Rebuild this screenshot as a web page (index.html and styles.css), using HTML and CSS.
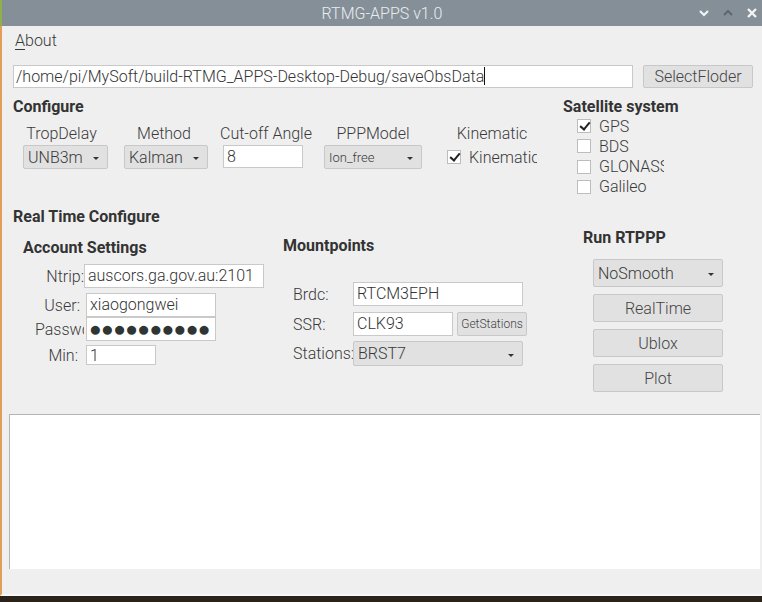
FILE: index.html
```html
<!DOCTYPE html>
<html>
<head>
<meta charset="utf-8">
<link rel="stylesheet" href="styles.css">
</head>
<body>
<div class="app">
  <div class="titlebar">
    <div></div>
    <div class="title">RTMG-APPS v1.0</div>
    <div class="wbtns">
      <svg class="wb" width="12" height="10" viewBox="0 0 12 10"><path d="M2 3 L6 7 L10 3" fill="none" stroke="#f2f4f5" stroke-width="2.2"/></svg>
      <svg class="wb" width="12" height="10" viewBox="0 0 12 10"><path d="M2 7 L6 3 L10 7" fill="none" stroke="#5f686f" stroke-width="2.2"/></svg>
      <svg class="wb" width="12" height="12" viewBox="0 0 12 12"><path d="M2 2 L10 10 M10 2 L2 10" fill="none" stroke="#f2f4f5" stroke-width="2.4"/></svg>
    </div>
  </div>
  <div class="win">
    <div class="menubar"><span class="menu"><u>A</u>bout</span></div>

    <div class="pathrow">
      <div class="input path">/home/pi/MySoft/build-RTMG_APPS-Desktop-Debug/saveObsData<span class="caret"></span></div>
      <div class="btn selbtn">SelectFloder</div>
    </div>

    <div class="top">
      <div class="configure">
        <div class="h16 hd">Configure</div>
        <div class="cfgrow">
          <div class="col c1">
            <div class="lbl">TropDelay</div>
            <div class="combo w85">UNB3m<span class="arrow"></span></div>
          </div>
          <div class="col c2">
            <div class="lbl">Method</div>
            <div class="combo w84">Kalman<span class="arrow"></span></div>
          </div>
          <div class="col c3">
            <div class="lbl">Cut-off Angle</div>
            <div class="input cut">8</div>
          </div>
          <div class="col c4">
            <div class="lbl">PPPModel</div>
            <div class="combo w98 small">Ion_free<span class="arrow"></span></div>
          </div>
          <div class="col c5">
            <div class="lbl">Kinematic</div>
            <div class="chkrow kin"><span class="cb on"></span><span class="cbt">Kinematic</span></div>
          </div>
        </div>
      </div>
      <div class="satellite">
        <div class="h16 hd">Satellite system</div>
        <div class="satlist">
          <div class="chkrow"><span class="cb on"></span><span class="cbt">GPS</span></div>
          <div class="chkrow"><span class="cb"></span><span class="cbt">BDS</span></div>
          <div class="chkrow"><span class="cb"></span><span class="cbt clip">GLONASS</span></div>
          <div class="chkrow"><span class="cb"></span><span class="cbt">Galileo</span></div>
        </div>
      </div>
    </div>

    <div class="h16 hd rtc">Real Time Configure</div>

    <div class="rtcols">
      <div class="account">
        <div class="h16">Account Settings</div>
        <div class="frow r-ntrip"><div class="flbl">Ntrip:</div><div class="input ntrip">auscors.ga.gov.au:2101</div></div>
        <div class="frow r-user"><div class="flbl pr4">User:</div><div class="input user">xiaogongwei</div></div>
        <div class="frow r-pass"><div class="flbl plbl">Passwd:</div><div class="input pass">●●●●●●●●●●</div></div>
        <div class="frow r-min"><div class="flbl pr6">Min:</div><div class="input min">1</div></div>
      </div>
      <div class="mount">
        <div class="h16">Mountpoints</div>
        <div class="mrow r-brdc"><div class="mlbl">Brdc:</div><div class="input w170">RTCM3EPH</div></div>
        <div class="mrow r-ssr"><div class="mlbl">SSR:</div><div class="input w100">CLK93</div><div class="btn getst">GetStations</div></div>
        <div class="mrow r-st"><div class="mlbl">Stations:</div><div class="combo w170 st">BRST7<span class="arrow"></span></div></div>
      </div>
      <div class="run">
        <div class="h16">Run RTPPP</div>
        <div class="runbtns">
          <div class="combo rb">NoSmooth<span class="arrow"></span></div>
          <div class="btn rb">RealTime</div>
          <div class="btn rb">Ublox</div>
          <div class="btn rb">Plot</div>
        </div>
      </div>
    </div>

    <div class="log"></div>
  </div>
</div>
</body>
</html>
```

FILE: styles.css
```css
* { box-sizing: border-box; }
html, body { margin: 0; padding: 0; }
body {
  width: 762px;
  height: 602px;
  background: #2b2219;
  font-family: Roboto, "Liberation Sans", sans-serif;
  font-weight: 300;
  color: #333;
  overflow: hidden;
}
.app { display: flex; flex-direction: column; width: 762px; height: 596px; }
.titlebar {
  height: 26px;
  background: #858f97;
  border-left: 2px solid #8fb04a;
  display: grid;
  grid-template-columns: 1fr auto 1fr;
  align-items: center;
}
.title { color: #e9edf0; font-size: 16px; font-weight: 300; }
.wbtns { display: flex; justify-content: flex-end; align-items: center; gap: 12px; padding-right: 4px; }
.wb { display: block; }

.win {
  flex: 1;
  background: #efefef;
  border-left: 2px solid #e29d5a;
  border-bottom: 2px solid #f8f8f8;
  display: flex;
  flex-direction: column;
}
.menubar { padding: 5px 0 14px 13px; height: 39px; line-height: 20px; font-size: 16px; color: #3a3a3a; }
.menu u { text-decoration-thickness: 1px; text-underline-offset: 3px; }

.input {
  background: #fff;
  border: 1px solid #c9c9c9;
  font-size: 16px;
  line-height: 21px;
  padding-left: 3px;
  color: #333;
  white-space: nowrap;
  overflow: hidden;
}
.btn {
  background: #e1e1e1;
  border: 1px solid #c8c8c8;
  border-radius: 2px;
  font-size: 16px;
  color: #444;
  display: flex;
  align-items: center;
  justify-content: center;
}
.combo {
  background: #e1e1e1;
  border: 1px solid #c8c8c8;
  border-radius: 2px;
  font-size: 16px;
  color: #3a3a3a;
  height: 24px;
  display: flex;
  align-items: center;
  padding-left: 4px;
  position: relative;
}
.arrow {
  position: absolute;
  right: 8px;
  top: 50%;
  margin-top: 0px;
  width: 0; height: 0;
  border-left: 3px solid transparent;
  border-right: 3px solid transparent;
  border-top: 3px solid #333;
}

.pathrow { display: flex; gap: 10px; margin-left: 11px; height: 23px; }
.path { width: 620px; height: 23px; padding-left: 2px; }
.caret { display: inline-block; width: 1px; height: 18px; background: #111; vertical-align: -3px; }
.selbtn { width: 110px; height: 23px; }

.h16 { font-size: 16px; font-weight: 700; line-height: 20px; color: #333; }
.hd { line-height: 18px; }

.top { display: flex; margin-top: 10px; height: 110px; }
.configure { width: 550px; margin-left: 11px; }
.cfgrow { display: flex; margin-top: 8px; }
.col { display: flex; flex-direction: column; }
.lbl { font-size: 16px; line-height: 20px; text-align: center; color: #3a3a3a; margin-bottom: 1px; white-space: nowrap; }
.c1 { margin-left: 10px; width: 85px; }
.c1 .lbl { margin-right: 8px; }
.c2 { margin-left: 16px; width: 84px; }
.c2 .lbl { margin-right: 4px; }
.c3 { margin-left: 12px; width: 92px; }
.c4 { margin-left: 12px; width: 98px; }
.c5 { margin-left: 25px; width: 90px; }
.w85 { width: 85px; }
.w84 { width: 84px; }
.w98 { width: 98px; }
.small { font-size: 13px; }
.cut { width: 80px; height: 23px; margin-left: 3px; }

.chkrow { display: flex; align-items: center; height: 20px; font-size: 16px; color: #3a3a3a; white-space: nowrap; }
.cb {
  width: 14px; height: 14px; flex: none;
  background: #fff; border: 1px solid #bdbdbd;
  position: relative;
}
.cb.on::after {
  content: "";
  position: absolute;
  left: 4px; top: 0px;
  width: 4px; height: 8px;
  border-right: 2px solid #222;
  border-bottom: 2px solid #222;
  transform: rotate(40deg);
}
.cbt { margin-left: 8px; }
.kin { margin-top: 2px; width: 90px; overflow: hidden; }
.satellite { margin-left: 0; }
.satlist { margin-left: 14px; display: flex; flex-direction: column; gap: 0.3px; }
.clip { width: 65px; overflow: hidden; }

.rtc { margin-left: 11px; }
.rtcols { display: flex; align-items: flex-start; margin-left: 11px; }
.account { width: 270px; margin-top: 12px; padding-left: 10px; }
.frow { display: flex; align-items: center; }
.flbl { width: 61px; text-align: right; font-size: 16px; color: #3a3a3a; white-space: nowrap; }
.pr4 { padding-right: 4px; }
.pr6 { padding-right: 6px; }
.plbl { text-align: left; padding-left: 12px; overflow: hidden; }
.r-ntrip { margin-top: 6px; }
.ntrip { width: 180px; height: 24px; }
.r-user { margin-top: 5px; }
.user { width: 130px; height: 24px; margin-left: 2px; }
.r-pass { margin-top: 0; }
.pass { width: 130px; height: 24px; margin-left: 2px; font-family: "DejaVu Sans", sans-serif; font-size: 21px; line-height: 22px; letter-spacing: -0.6px; color: #2f3533; padding-left: 2px; }
.r-min { margin-top: 4px; }
.min { width: 70px; height: 20px; margin-left: 2px; line-height: 19px; }

.mount { width: 300px; margin-top: 10px; }
.mrow { display: flex; align-items: center; margin-left: 10px; }
.mlbl { width: 60px; font-size: 16px; color: #3a3a3a; white-space: nowrap; }
.w170 { width: 170px; height: 24px; }
.w100 { width: 100px; height: 24px; }
.r-brdc { margin-top: 26px; }
.r-ssr { margin-top: 6px; }
.getst { width: 70px; height: 24px; margin-left: 4px; font-size: 12px; }
.r-st { margin-top: 5px; }
.st { height: 25px; }

.run { margin-top: 2px; }
.runbtns { display: flex; flex-direction: column; gap: 7px; margin-top: 11px; margin-left: 10px; }
.rb { width: 130px; height: 28px; }

.log {
  margin: 22px 0 0 7px;
  width: 751px;
  height: 155px;
  background: #fff;
  border-top: 1px solid #b5b5b5;
  border-left: 1px solid #b5b5b5;
}
```
